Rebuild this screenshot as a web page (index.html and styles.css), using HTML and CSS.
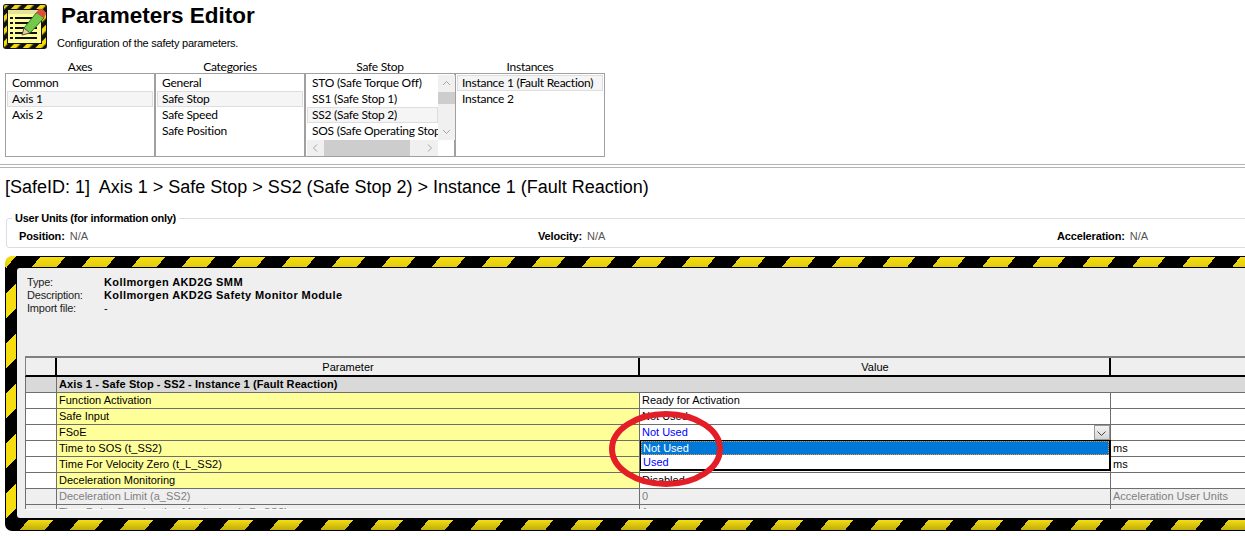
FILE: index.html
```html
<!DOCTYPE html>
<html lang="en">
<head>
    <meta charset="UTF-8">
    <title>Parameters Editor</title>
    <link rel="stylesheet" href="styles.css">
</head>
<body>
    <header class="page-head">
        <svg class="head-icon" width="44" height="45" viewBox="0 0 44 45">
            <defs>
                <pattern id="hazard" width="9" height="9" patternUnits="userSpaceOnUse" patternTransform="rotate(45)">
                    <rect width="9" height="9" fill="#111"/>
                    <rect width="4.5" height="9" fill="#f2d90c"/>
                </pattern>
            </defs>
            <rect x="0" y="0" width="44" height="45" rx="3" fill="#111"/>
            <rect x="1" y="1" width="42" height="43" rx="2" fill="url(#hazard)"/>
            <rect x="4" y="5" width="35" height="35" fill="#111"/>
            <rect x="5" y="6" width="33" height="33" fill="#ffff9c"/>
            <rect x="5" y="6" width="33" height="4" fill="#e4e49a"/>
            <path d="M12 14h22M12 19h22M12 24h22M12 29h22M12 34h22" stroke="#111" stroke-width="2"/>
            <path d="M7 13h3v2H7zM7 18h3v2H7zM7 23h3v2H7zM7 28h3v2H7zM7 33h3v2H7z" fill="#111"/>
            <path d="M21 24L34 8l7 6-14 15-7 1z" fill="#74c94a" stroke="#2c6e1c" stroke-width="1"/>
            <path d="M21 24l-2 7 8-2z" fill="#e8d0a0" stroke="#333" stroke-width=".8"/>
            <path d="M33 9l3-4c3-1 6 1 7 5l-2 4z" fill="#d8503c"/>
        </svg>
        <div>
            <h1>Parameters Editor</h1>
            <p class="subtitle">Configuration of the safety parameters.</p>
        </div>
    </header>

    <section class="selectors">
        <div class="selector">
            <div class="selector-label">Axes</div>
            <ul class="list">
                <li>Common</li>
                <li class="current">Axis 1</li>
                <li>Axis 2</li>
            </ul>
        </div>
        <div class="selector">
            <div class="selector-label">Categories</div>
            <ul class="list">
                <li>General</li>
                <li class="current">Safe Stop</li>
                <li>Safe Speed</li>
                <li>Safe Position</li>
            </ul>
        </div>
        <div class="selector">
            <div class="selector-label">Safe Stop</div>
            <div class="list list-scroll">
                <ul class="scroll-items">
                    <li>STO (Safe Torque Off)</li>
                    <li>SS1 (Safe Stop 1)</li>
                    <li class="current">SS2 (Safe Stop 2)</li>
                    <li>SOS (Safe Operating Stop)</li>
                </ul>
                <div class="vbar">
                    <svg width="17" height="17" viewBox="0 0 17 17"><path d="M5 10l3.5-3.5L12 10" fill="none" stroke="#a6a6a6"/></svg>
                    <div class="vthumb"></div>
                    <svg class="vdown" width="17" height="17" viewBox="0 0 17 17"><path d="M5 7l3.5 3.5L12 7" fill="none" stroke="#a6a6a6"/></svg>
                </div>
                <div class="hbar">
                    <svg width="17" height="16" viewBox="0 0 17 16"><path d="M10 4.5L6.5 8l3.500 3.500" fill="none" stroke="#a6a6a6"/></svg>
                    <div class="hthumb"></div>
                    <svg class="hright" width="17" height="16" viewBox="0 0 17 16"><path d="M7 4.500L10.500 8 7 11.500" fill="none" stroke="#a6a6a6"/></svg>
                </div>
            </div>
        </div>
        <div class="selector">
            <div class="selector-label">Instances</div>
            <ul class="list">
                <li class="current">Instance 1 (Fault Reaction)</li>
                <li>Instance 2</li>
            </ul>
        </div>
    </section>

    <div class="separator"></div>

    <h2 class="crumb">[SafeID: 1]&nbsp; Axis 1 &gt; Safe Stop &gt; SS2 (Safe Stop 2) &gt; Instance 1 (Fault Reaction)</h2>

    <fieldset class="units">
        <legend>User Units (for information only)</legend>
        <div class="unit unit-pos"><b>Position:</b> <span>N/A</span></div>
        <div class="unit unit-vel"><b>Velocity:</b> <span>N/A</span></div>
        <div class="unit unit-acc"><b>Acceleration:</b> <span>N/A</span></div>
    </fieldset>

    <section class="hazard">
        <div class="panel">
            <dl class="info">
                <dt>Type:</dt><dd>Kollmorgen AKD2G SMM</dd>
                <dt>Description:</dt><dd>Kollmorgen AKD2G Safety Monitor Module</dd>
                <dt>Import file:</dt><dd class="plain">-</dd>
            </dl>
            <div class="grid-wrap">
                <table class="grid">
                    <colgroup>
                        <col class="col-gutter">
                        <col class="col-param">
                        <col class="col-value">
                        <col class="col-unit">
                    </colgroup>
                    <thead>
                        <tr><th></th><th>Parameter</th><th>Value</th><th></th></tr>
                    </thead>
                    <tbody>
                        <tr class="group"><td></td><td colspan="3">Axis 1 - Safe Stop - SS2 - Instance 1 (Fault Reaction)</td></tr>
                        <tr><td></td><td class="name">Function Activation</td><td>Ready for Activation</td><td></td></tr>
                        <tr><td></td><td class="name">Safe Input</td><td>Not Used</td><td></td></tr>
                        <tr><td></td><td class="name">FSoE</td><td class="edit">Not Used</td><td></td></tr>
                        <tr><td></td><td class="name">Time to SOS (t_SS2)</td><td></td><td>ms</td></tr>
                        <tr><td></td><td class="name">Time For Velocity Zero (t_L_SS2)</td><td></td><td>ms</td></tr>
                        <tr><td></td><td class="name">Deceleration Monitoring</td><td>Disabled</td><td></td></tr>
                        <tr class="off"><td></td><td>Deceleration Limit (a_SS2)</td><td>0</td><td>Acceleration User Units</td></tr>
                        <tr class="off"><td></td><td>Time Delay Deceleration Monitoring (t_D_SS2)</td><td>1</td><td></td></tr>
                    </tbody>
                </table>
                <div class="combo-btn">
                    <svg width="13" height="13" viewBox="0 0 13 13"><path d="M2.500 5.500L6.500 9.500l4-4" fill="none" stroke="#444"/></svg>
                </div>
                <ul class="dropdown">
                    <li class="picked">Not Used</li>
                    <li>Used</li>
                </ul>
                <svg class="ring" width="116" height="78" viewBox="0 0 116 78">
                    <ellipse cx="58" cy="39" rx="54" ry="35" fill="none" stroke="#e41e26" stroke-width="6"/>
                </svg>
            </div>
        </div>
    </section>
</body>
</html>
```

FILE: styles.css
```css
html, body {
    margin: 0;
    padding: 0;
    height: 536px;
    overflow: hidden;
    background: #fff;
}
body {
    font-family: "Liberation Sans", Arial, sans-serif;
    font-size: 12px;
    color: #000;
}
ul {
    list-style: none;
    margin: 0;
    padding: 0;
}

/* header */
.page-head {
    display: flex;
    height: 61px;
    padding: 4px 0 0 3px;
    box-sizing: border-box;
}
.head-icon {
    margin-right: 10px;
    flex: none;
}
.page-head h1 {
    margin: -1px 0 0 4px;
    font-size: 22.5px;
    line-height: 26px;
    font-weight: bold;
}
.subtitle {
    margin: 8px 0 0;
    font-size: 11px;
    line-height: 13px;
    letter-spacing: -.23px;
}

/* the four list boxes */
.selectors {
    display: flex;
    padding-left: 5px;
    font-family: Lato, "Liberation Sans", sans-serif;
    letter-spacing: -.25px;
}
.selector {
    width: 150px;
}
.selector-label {
    height: 12px;
    line-height: 12px;
    text-align: center;
}
.list {
    height: 84px;
    box-sizing: border-box;
    border: 1px solid #a0a0a0;
    padding: 1px;
    background: #fff;
}
.list li {
    height: 16px;
    line-height: 16px;
    padding-left: 5px;
    white-space: nowrap;
    overflow: hidden;
}
.list li.current {
    background: #f5f5f5;
    box-shadow: inset 0 0 0 1px #dedede;
}
.list-scroll {
    display: grid;
    grid-template-columns: 131px 17px;
    grid-template-rows: 65px 16px;
    padding: 1px 0 0 1px;
}
.scroll-items {
    overflow: hidden;
}
.vbar {
    display: flex;
    flex-direction: column;
    background: #f0f0f0;
}
.vthumb {
    height: 12px;
    background: #cdcdcd;
}
.vdown {
    margin-top: auto;
}
.hbar {
    display: flex;
    background: #f0f0f0;
}
.hthumb {
    width: 86px;
    background: #cdcdcd;
}
.hright {
    margin-left: auto;
}

.separator {
    height: 2px;
    margin-top: 7px;
    border-top: 1px solid #b4b4b4;
    border-bottom: 1px solid #b4b4b4;
}
.crumb {
    margin: 9px 0 0 5px;
    font-size: 18px;
    line-height: 20px;
    font-weight: normal;
    letter-spacing: -.015px;
}

/* user units */
.units {
    position: relative;
    height: 35px;
    box-sizing: border-box;
    margin: 16px -10px 0 6px;
    padding: 0;
    border: 1px solid #d5dfe5;
    border-radius: 3px;
}
.units legend {
    margin-left: 5px;
    padding: 0 3px 0 3px;
    font-size: 11px;
    font-weight: bold;
    line-height: 11px;
    letter-spacing: -.25px;
}
.unit {
    position: absolute;
    top: 6px;
    font-size: 11px;
    line-height: 13px;
    white-space: nowrap;
}
.unit b {
    letter-spacing: -.15px;
}
.unit span {
    margin-left: 2px;
    color: #555;
}
.unit-pos { left: 12px; }
.unit-vel { left: 531px; }
.unit-acc { left: 1050px; }

/* hazard frame */
.hazard {
    height: 275px;
    margin: 8px -40px 0 5px;
    padding: 12px 0 13px 12px;
    box-sizing: border-box;
    border-radius: 7px;
    background-color: #000;
    background-repeat: no-repeat;
    background-image:
        linear-gradient(rgba(0,0,0,0), rgba(0,0,0,.08)),
        repeating-linear-gradient(128.66deg, #f5dd10 0 7.8px, #000 7.8px 27.3px, #f5dd10 27.3px 39.05px),
        linear-gradient(rgba(0,0,0,0), rgba(0,0,0,.22)),
        repeating-linear-gradient(128.66deg, #000 0 18px, #f5dd10 18px 37.5px, #000 37.5px 39.05px),
        repeating-linear-gradient(135deg, #f5dd10 0 8.5px, #000 8.5px 26.2px, #f5dd10 26.2px 35.36px);
    background-size: 100% 10px, 100% 10px, 100% 10px, 100% 10px, 10px 100%;
    background-position: 0 1px, 0 1px, 0 264px, 0 264px, 1px 0;
}
.panel {
    height: 250px;
    box-sizing: border-box;
    padding: 8px 0 0 8px;
    border-radius: 3px 0 0 3px;
    background: #efefef;
}
.info {
    display: grid;
    grid-template-columns: 77px 1fr;
    grid-auto-rows: 13px;
    height: 80px;
    margin: 0 0 0 2px;
    font-size: 11px;
    line-height: 13px;
    color: #222;
}
.info dt {
    letter-spacing: -.2px;
}
.info dd {
    margin: 0;
    font-weight: bold;
    letter-spacing: .4px;
    color: #000;
}
.info dd.plain {
    font-weight: normal;
}

/* parameter grid */
.grid-wrap {
    position: relative;
    height: 154px;
    overflow: hidden;
    border-top: 2px solid #808080;
    border-bottom: 1px solid #fafafa;
    box-sizing: border-box;
}
.grid {
    table-layout: fixed;
    width: 1230px;
    border-collapse: separate;
    border-spacing: 0;
    font-size: 11px;
    background: #fff;
}
.col-gutter { width: 31px; }
.col-param { width: 583px; }
.col-value { width: 471px; }
.col-unit { width: 145px; }
.grid th {
    height: 17px;
    padding: 0;
    background: #efefef;
    font-weight: normal;
    text-align: center;
    border-left: 1px solid #000;
    border-bottom: 2px solid #000;
    box-shadow: -1px 0 0 #000;
}
.grid th:first-child {
    border-left: 1px solid #808080;
    box-shadow: none;
}
.grid td {
    height: 15px;
    padding: 0 0 0 2px;
    line-height: 15px;
    border-left: 1px solid #6e6e6e;
    border-bottom: 1px solid #6e6e6e;
    white-space: nowrap;
    overflow: hidden;
}
.grid .name {
    background: #ffff99;
}
.grid .edit {
    color: #0000ff;
}
.group td {
    background: #d9d9d9;
    font-weight: bold;
    letter-spacing: .1px;
}
.off td {
    background: #efefef;
    color: #808080;
}

/* open combo over the FSoE row */
.combo-btn {
    position: absolute;
    left: 1069px;
    top: 67px;
    width: 14px;
    height: 13px;
    border: 1px solid #999;
    background: linear-gradient(#f4f4f4, #d4d4d4);
}
.dropdown {
    position: absolute;
    left: 615px;
    top: 82px;
    width: 468px;
    height: 28px;
    border: 1px solid #000;
    border-width: 1px 2px 2px 1px;
    background: #fff;
    font-size: 11px;
    color: #0000ff;
}
.dropdown li {
    height: 14px;
    line-height: 14px;
    padding-left: 2px;
}
.dropdown .picked {
    background: #0078d7;
    color: #fff;
    outline: 1px dotted #f09030;
    outline-offset: -1px;
}
.ring {
    position: absolute;
    left: 583px;
    top: 52px;
}
```
